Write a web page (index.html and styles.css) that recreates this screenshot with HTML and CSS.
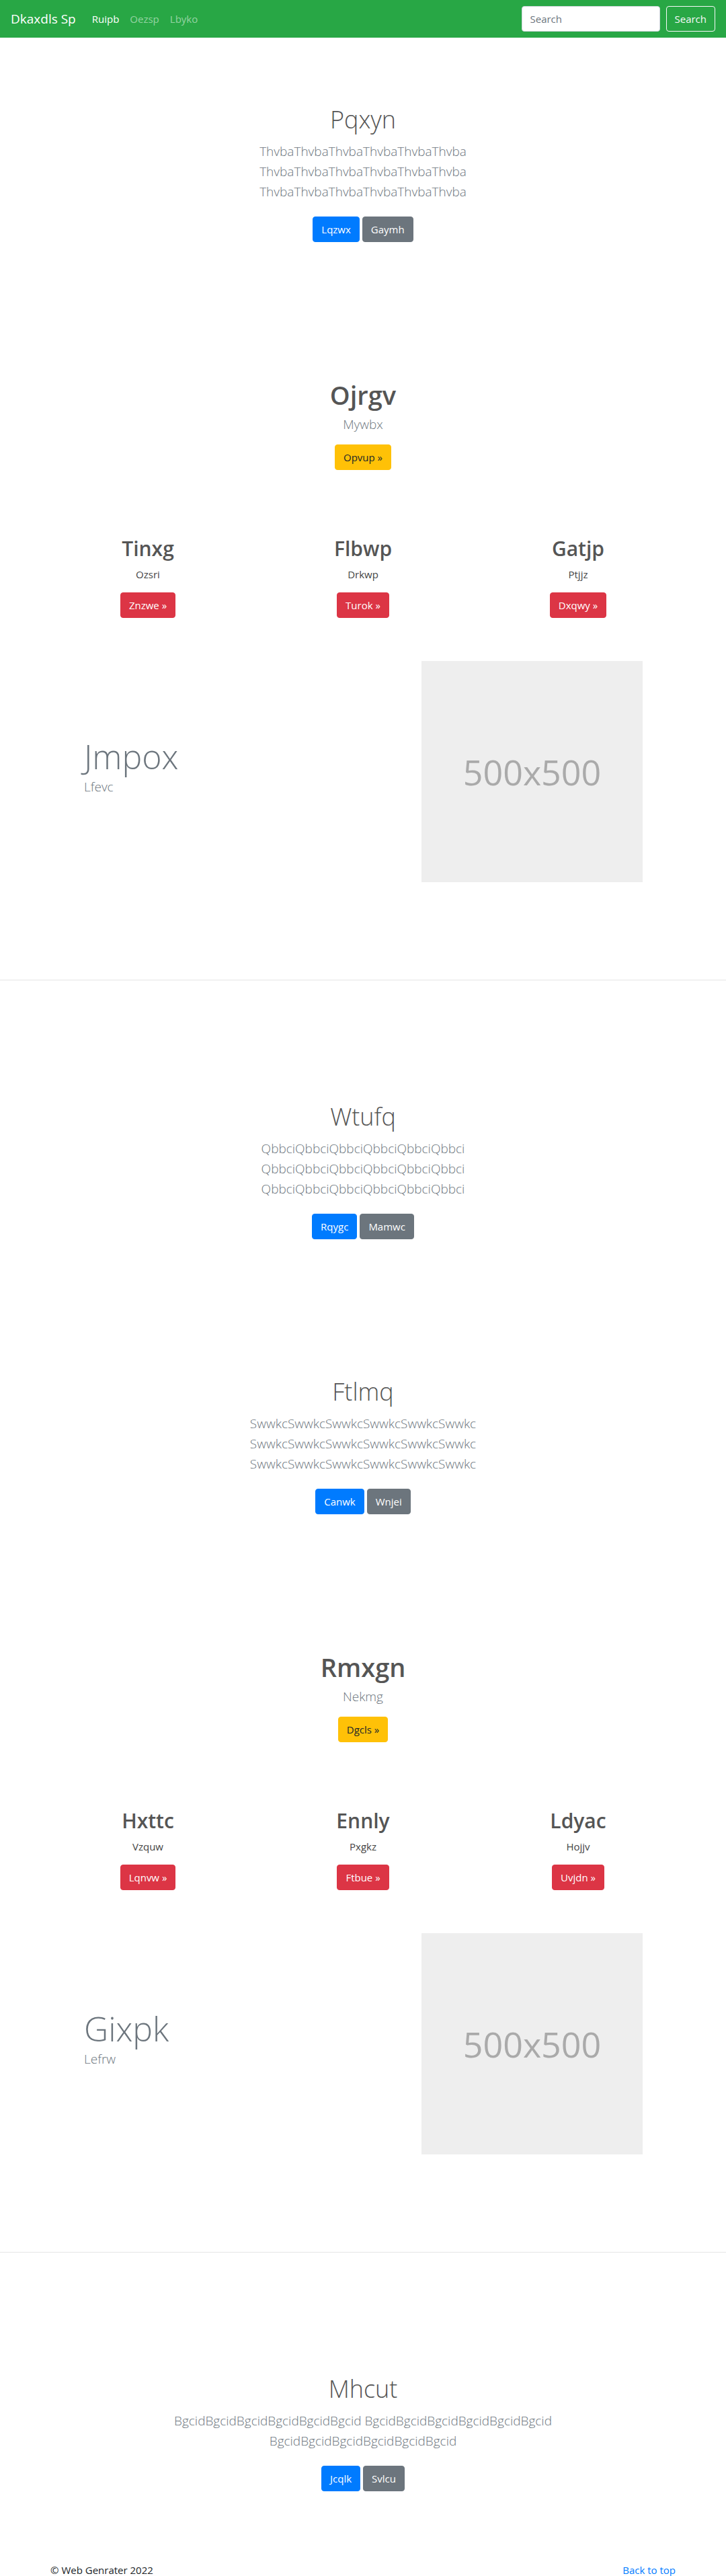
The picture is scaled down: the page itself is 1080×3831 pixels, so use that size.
FILE: index.html
```html
<!DOCTYPE html>
<html lang="en">
<head>
<meta charset="utf-8">
<title>Dkaxdls Sp</title>
<link rel="stylesheet" href="styles.css">
</head>
<body>
<nav class="navbar">
  <a class="brand" href="#">Dkaxdls Sp</a>
  <ul class="nav-links">
    <li><a class="nav-link active" href="#">Ruipb</a></li>
    <li><a class="nav-link" href="#">Oezsp</a></li>
    <li><a class="nav-link" href="#">Lbyko</a></li>
  </ul>
  <form class="search">
    <input class="search-input" type="text" placeholder="Search">
    <button class="btn btn-outline-light" type="button">Search</button>
  </form>
</nav>

<main>
  <section class="hero hero-first">
    <h1 class="hero-title">Pqxyn</h1>
    <p class="lead narrow">ThvbaThvbaThvbaThvbaThvbaThvba ThvbaThvbaThvbaThvbaThvbaThvba ThvbaThvbaThvbaThvbaThvbaThvba</p>
    <div class="btn-row">
      <a class="btn btn-primary" href="#">Lqzwx</a>
      <a class="btn btn-secondary" href="#">Gaymh</a>
    </div>
  </section>

  <section class="feature">
    <h1 class="feature-title">Ojrgv</h1>
    <p class="lead">Mywbx</p>
    <a class="btn btn-warning" href="#">Opvup »</a>
  </section>

  <section class="cols">
    <div class="col">
      <h2 class="col-title">Tinxg</h2>
      <p class="col-text">Ozsri</p>
      <a class="btn btn-danger" href="#">Znzwe »</a>
    </div>
    <div class="col">
      <h2 class="col-title">Flbwp</h2>
      <p class="col-text">Drkwp</p>
      <a class="btn btn-danger" href="#">Turok »</a>
    </div>
    <div class="col">
      <h2 class="col-title">Gatjp</h2>
      <p class="col-text">Ptjjz</p>
      <a class="btn btn-danger" href="#">Dxqwy »</a>
    </div>
  </section>

  <section class="split">
    <div class="split-text">
      <h2 class="split-title">Jmpox</h2>
      <p class="lead split-lead">Lfevc</p>
    </div>
    <div class="placeholder">500x500</div>
  </section>

  <hr class="divider">

  <section class="hero hero-after-rule">
    <h1 class="hero-title">Wtufq</h1>
    <p class="lead narrow">QbbciQbbciQbbciQbbciQbbciQbbci QbbciQbbciQbbciQbbciQbbciQbbci QbbciQbbciQbbciQbbciQbbciQbbci</p>
    <div class="btn-row">
      <a class="btn btn-primary" href="#">Rqygc</a>
      <a class="btn btn-secondary" href="#">Mamwc</a>
    </div>
  </section>

  <section class="hero hero-next">
    <h1 class="hero-title">Ftlmq</h1>
    <p class="lead narrow">SwwkcSwwkcSwwkcSwwkcSwwkcSwwkc SwwkcSwwkcSwwkcSwwkcSwwkcSwwkc SwwkcSwwkcSwwkcSwwkcSwwkcSwwkc</p>
    <div class="btn-row">
      <a class="btn btn-primary" href="#">Canwk</a>
      <a class="btn btn-secondary" href="#">Wnjei</a>
    </div>
  </section>

  <section class="feature">
    <h1 class="feature-title">Rmxgn</h1>
    <p class="lead">Nekmg</p>
    <a class="btn btn-warning" href="#">Dgcls »</a>
  </section>

  <section class="cols">
    <div class="col">
      <h2 class="col-title">Hxttc</h2>
      <p class="col-text">Vzquw</p>
      <a class="btn btn-danger" href="#">Lqnvw »</a>
    </div>
    <div class="col">
      <h2 class="col-title">Ennly</h2>
      <p class="col-text">Pxgkz</p>
      <a class="btn btn-danger" href="#">Ftbue »</a>
    </div>
    <div class="col">
      <h2 class="col-title">Ldyac</h2>
      <p class="col-text">Hojjv</p>
      <a class="btn btn-danger" href="#">Uvjdn »</a>
    </div>
  </section>

  <section class="split">
    <div class="split-text">
      <h2 class="split-title">Gixpk</h2>
      <p class="lead split-lead">Lefrw</p>
    </div>
    <div class="placeholder">500x500</div>
  </section>

  <hr class="divider">

  <section class="hero hero-after-rule">
    <h1 class="hero-title">Mhcut</h1>
    <p class="lead wide">BgcidBgcidBgcidBgcidBgcidBgcid BgcidBgcidBgcidBgcidBgcidBgcid BgcidBgcidBgcidBgcidBgcidBgcid</p>
    <div class="btn-row">
      <a class="btn btn-primary" href="#">Jcqlk</a>
      <a class="btn btn-secondary" href="#">Svlcu</a>
    </div>
  </section>
</main>

<footer class="footer">
  <p>© Web Genrater 2022</p>
  <p><a href="#">Back to top</a></p>
</footer>
</body>
</html>
```

FILE: styles.css
```css
* { box-sizing: border-box; }

html, body {
  margin: 0;
  padding: 0;
}

body {
  font-family: "Open Sans", "Noto Sans", "Liberation Sans", sans-serif;
  font-size: 15px;
  line-height: 24px;
  color: #212529;
  background: #fff;
}

a { text-decoration: none; }

/* ---------- navbar ---------- */
.navbar {
  height: 56px;
  background: #28a745;
  display: flex;
  align-items: center;
  padding: 0 16px;
}

.brand {
  color: #fff;
  font-size: 19px;
  line-height: 30px;
  margin-right: 16px;
}

.nav-links {
  list-style: none;
  margin: 0;
  padding: 0;
  display: flex;
  flex: 1;
}

.nav-link {
  display: block;
  padding: 8px;
  color: rgba(255, 255, 255, 0.5);
}

.nav-link.active { color: #fff; }

.search {
  display: flex;
  align-items: center;
  gap: 9px;
}

.search-input {
  width: 206px;
  height: 38px;
  padding: 6px 12px;
  font: inherit;
  color: #495057;
  background: #fff;
  border: 1px solid #ced4da;
  border-radius: 4px;
}

.search-input::placeholder { color: #6c757d; }

/* ---------- buttons ---------- */
.btn {
  display: inline-block;
  padding: 6px 12px;
  font-size: 15px;
  line-height: 24px;
  border: 1px solid transparent;
  border-radius: 4px;
  color: #fff;
  background: transparent;
  font-family: inherit;
}

.btn-primary { background: #007bff; border-color: #007bff; }
.btn-secondary { background: #6c757d; border-color: #6c757d; }
.btn-warning { background: #ffc107; border-color: #ffc107; color: #212529; }
.btn-danger { background: #dc3545; border-color: #dc3545; }
.btn-outline-light { color: #f8f9fa; border-color: #f8f9fa; }

.btn-row {
  display: flex;
  justify-content: center;
  gap: 4px;
  margin-top: 22px;
}

/* ---------- text ---------- */
.lead {
  font-size: 19px;
  line-height: 30px;
  font-weight: 300;
  color: #6c757d;
  margin: 0;
}

.narrow { max-width: 450px; margin: 0 auto; }
.wide { max-width: 640px; margin: 0 auto; }

/* ---------- hero blocks ---------- */
.hero {
  text-align: center;
}

.hero-first { padding-top: 98px; }
.hero-after-rule { padding-top: 179px; }
.hero-next { padding-top: 203px; }

.hero-title {
  font-size: 36px;
  line-height: 48px;
  font-weight: 300;
  color: #555;
  margin: 0 0 8px;
}

/* ---------- feature ---------- */
.feature {
  text-align: center;
  padding-top: 203px;
}

.feature-title {
  font-size: 38px;
  line-height: 48px;
  font-weight: 600;
  color: #555;
  margin: 0 0 5px;
}

.feature .btn { margin-top: 15px; }

/* ---------- three columns ---------- */
.cols {
  width: 960px;
  margin: 98px auto 0;
  display: grid;
  grid-template-columns: repeat(3, 1fr);
}

.col {
  text-align: center;
  padding: 0 15px;
}

.col-title {
  font-size: 30px;
  line-height: 38px;
  font-weight: 600;
  color: #555;
  margin: 0 0 7px;
}

.col-text {
  margin: 0 0 15px;
  font-size: 15px;
  color: #444;
}

/* ---------- split ---------- */
.split {
  width: 960px;
  margin: 64px auto 0;
  padding: 0 64px 0 65px;
  display: flex;
  align-items: center;
  justify-content: space-between;
}

.split-title {
  font-size: 50px;
  line-height: 60px;
  font-weight: 300;
  color: #6c757d;
  margin: 0;
}

.split-lead { margin-bottom: 16px; }

.placeholder {
  width: 329px;
  height: 329px;
  background: #eee;
  color: #aaa;
  font-size: 52px;
  display: flex;
  align-items: center;
  justify-content: center;
}

/* ---------- divider ---------- */
.divider {
  margin: 145px 0 0;
  border: 0;
  border-top: 1px solid rgba(0, 0, 0, 0.1);
  height: 0;
}

/* ---------- footer ---------- */
.footer {
  width: 960px;
  margin: 0 auto;
  padding: 105px 15px 0;
  display: flex;
  justify-content: space-between;
}

.footer p { margin: 0; }
.footer a { color: #007bff; }
```
